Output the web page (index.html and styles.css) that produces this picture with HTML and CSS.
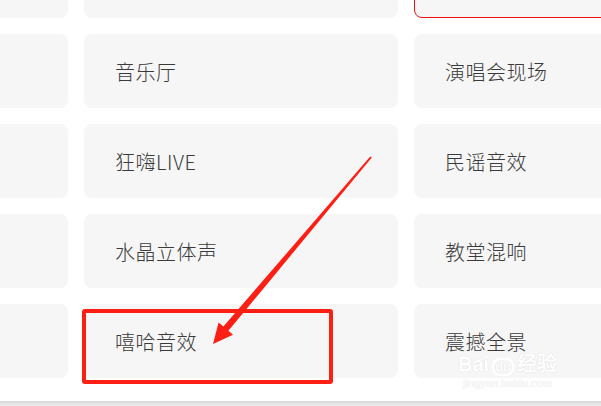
FILE: index.html
```
<!DOCTYPE html>
<html lang="zh-CN">
<head>
    <meta charset="UTF-8">
    <meta name="viewport" content="width=device-width, initial-scale=1.0">
    <title>音效</title>
    <link rel="stylesheet" href="styles.css">
</head>
<body>
    <div class="page">
        <div class="effects">
            <div class="effect"></div>
            <div class="effect"></div>
            <div class="effect selected"></div>

            <div class="effect"></div>
            <div class="effect">音乐厅</div>
            <div class="effect">演唱会现场</div>

            <div class="effect"></div>
            <div class="effect">狂嗨LIVE</div>
            <div class="effect">民谣音效</div>

            <div class="effect"></div>
            <div class="effect">水晶立体声</div>
            <div class="effect">教堂混响</div>

            <div class="effect"></div>
            <div class="effect">嘻哈音效</div>
            <div class="effect">震撼全景</div>
        </div>

        <div class="nextLine">打开或者在【设置】中，打开或者在设置中选择，下一步找到需要的音效然后</div>

        <!-- annotation drawn on top of the screenshot -->
        <div class="markBox"></div>
        <svg class="arrow" width="601" height="406" viewBox="0 0 601 406">
            <polygon fill="#fe1f14" points="371.8,157.6 228.4,330.8 233,334.8 213,344 218.6,322.6 223.4,326.6 370.2,156.4"/>
        </svg>

        <div class="watermark">
            <div class="wmLogo">Bai<span class="paw">du</span>经验</div>
            <div class="wmUrl">jingyan.baidu.com</div>
        </div>
    </div>
</body>
</html>
```

FILE: styles.css
```
body {
    margin: 0;
    background-color: #fff;
    font-family: "Noto Sans CJK SC", "Noto Sans", sans-serif;
}
.page {
    position: relative;
    width: 601px;
    height: 406px;
    overflow: hidden;
}
.effects {
    display: grid;
    grid-template-columns: 314px 314px 314px;
    grid-auto-rows: 74px;
    gap: 16px;
    margin-left: -246px;
    margin-top: -56px;
}
.effect {
    display: flex;
    align-items: center;
    padding-left: 31px;
    background-color: #f6f6f6;
    border-radius: 8px;
    color: #3a3a3a;
    font-size: 20px;
    font-weight: 300;
    letter-spacing: 0.5px;
}
.selected {
    border: 1px solid #f21010;
}
.nextLine {
    margin-top: 23px;
    height: 5px;
    overflow: hidden;
    padding-left: 50px;
    background: linear-gradient(#d9d9d9, #ececec);
    color: #222;
    font-size: 17px;
    line-height: 26px;
    white-space: nowrap;
}
.markBox {
    position: absolute;
    left: 82px;
    top: 309px;
    width: 243px;
    height: 67px;
    border: 4px solid #fe1f14;
    border-radius: 3px;
}
.arrow {
    position: absolute;
    left: 0;
    top: 0;
}
.watermark {
    position: absolute;
    left: 458px;
    top: 352px;
    color: #fff;
    text-shadow: 0 0 1px #cfcfcf;
    text-align: center;
}
.wmLogo {
    font-family: "Liberation Sans", sans-serif;
    font-size: 20px;
    font-weight: bold;
    line-height: 24px;
}
.paw {
    display: inline-block;
    margin: 0 3px;
    font-size: 13px;
    border: 2px solid #fff;
    border-radius: 8px;
    line-height: 14px;
    padding: 0 1px;
}
.wmUrl {
    font-family: "Liberation Sans", sans-serif;
    font-size: 11px;
    line-height: 14px;
}
```
